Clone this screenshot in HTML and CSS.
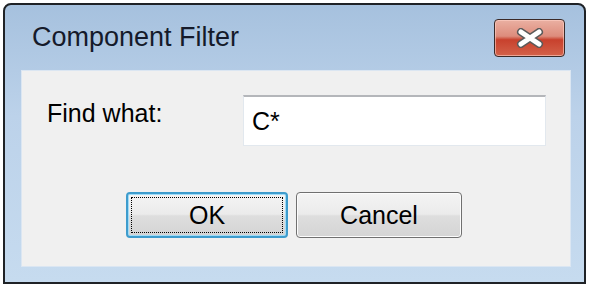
FILE: index.html
```html
<!DOCTYPE html>
<html lang="en">
<head>
  <meta charset="UTF-8">
  <title>Component Filter</title>
  <link rel="stylesheet" href="styles.css">
</head>
<body>

  <div class="window">
    <div class="title-bar">
      <span class="title">Component Filter</span>
      <button class="close-btn" aria-label="Close">
        <svg width="30" height="20" viewBox="0 0 30 20">
          <path d="M6 4 L24 16 M24 4 L6 16" stroke="#5a5a5a" stroke-width="8" stroke-linecap="round"/>
          <path d="M6 4 L24 16 M24 4 L6 16" stroke="#ffffff" stroke-width="5" stroke-linecap="round"/>
        </svg>
      </button>
    </div>

    <div class="client">
      <div class="find-row">
        <label class="find-label" for="find">Find what:</label>
        <input class="find-input" id="find" type="text" value="C*">
      </div>
      <div class="button-row">
        <button class="dlg-btn default-btn">OK</button>
        <button class="dlg-btn">Cancel</button>
      </div>
    </div>
  </div>

</body>
</html>
```

FILE: styles.css
```css
body {
    margin: 0;
    background-color: #ffffff;
    font-family: "Liberation Sans", Arial, sans-serif;
}

.window {
    width: 583px;
    height: 281px;
    margin: 3px 0 0 3px;
    border: 2px solid #1f2226;
    border-radius: 8px 8px 0 0;
    background: linear-gradient(to bottom, #a6c1de 0%, #bcd2ea 40%, #c6dbef 100%);
    padding: 0 13px 15px 16px;
    box-sizing: border-box;
    display: flex;
    flex-direction: column;
}

.title-bar {
    height: 65px;
    display: flex;
    align-items: center;
    justify-content: space-between;
    padding: 0 6px 0 11px;
    flex-shrink: 0;
}

.title {
    font-size: 27px;
    color: #151a2a;
}

.close-btn {
    width: 71px;
    height: 38px;
    margin-top: 1px;
    border: 1px solid #3b2a28;
    border-radius: 4px;
    background: linear-gradient(to bottom, #eab0a2 0%, #dd8c7c 45%, #c8412d 55%, #d3624a 100%);
    box-shadow: inset 0 0 0 1px rgba(255, 210, 200, 0.6);
    display: flex;
    align-items: center;
    justify-content: center;
    padding: 0;
}

.client {
    flex: 1;
    background-color: #f0f0f0;
    border: 1px solid #dbe6f2;
    padding: 24px 24px 0 25px;
    display: flex;
    flex-direction: column;
}

.find-row {
    display: flex;
    align-items: flex-start;
}

.find-label {
    width: 196px;
    flex-shrink: 0;
    font-size: 25px;
    padding-top: 4px;
    color: #000;
}

.find-input {
    flex: 1;
    min-width: 0;
    height: 51px;
    box-sizing: border-box;
    border: 1px solid #e2e8ee;
    border-top: 2px solid #b4b6ba;
    background-color: #ffffff;
    font-family: "Liberation Sans", Arial, sans-serif;
    font-size: 25px;
    color: #000;
    padding: 0 8px;
    outline: none;
}

.button-row {
    display: flex;
    gap: 8px;
    margin-top: 46px;
    padding-left: 79px;
}

.dlg-btn {
    width: 166px;
    height: 46px;
    border: 1px solid #707070;
    border-radius: 4px;
    background: linear-gradient(to bottom, #f4f4f4 0%, #ebebeb 48%, #dedede 52%, #d4d4d4 100%);
    box-shadow: inset 0 0 0 1px #fcfcfc;
    font-family: "Liberation Sans", Arial, sans-serif;
    font-size: 25px;
    color: #000;
    padding: 0;
}

.default-btn {
    width: 162px;
    border: 2px solid #3e9ccd;
    box-shadow: inset 0 0 0 1px #9fdcf8;
    outline: 1px dotted #000;
    outline-offset: -6px;
}
```
